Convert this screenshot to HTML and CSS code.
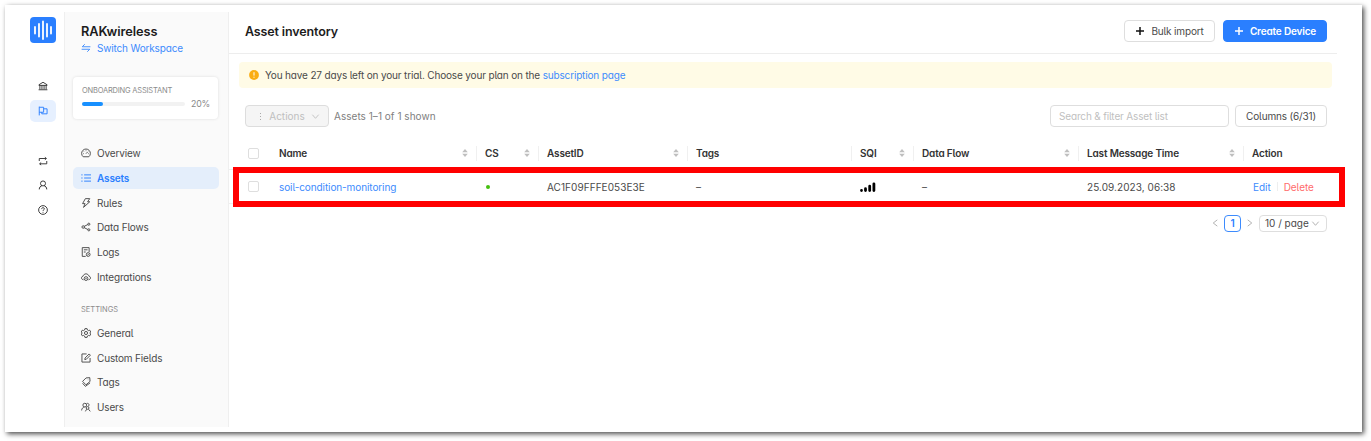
FILE: index.html
```html
<!DOCTYPE html>
<html lang="en">
<head>
<meta charset="utf-8">
<title>Asset inventory</title>
<link rel="stylesheet" href="styles.css">
</head>
<body>
<svg class="defs" width="0" height="0">
  <symbol id="sort" viewBox="0 0 6 8"><path d="M3 0L5.8 3.2H.2zM3 8L5.8 4.8H.2z" fill="#bfbfbf"/></symbol>
  <symbol id="down" viewBox="0 0 10 10"><path d="M1.5 3l3.5 4 3.5-4"/></symbol>
  <symbol id="plus" viewBox="0 0 10 10"><path d="M5 1v8M1 5h8"/></symbol>
</svg>
<div class="panel">
  <nav class="rail">
    <svg class="logo" viewBox="0 0 26 26"><rect width="26" height="26" rx="4" fill="#2a7fff"/><path d="M5 10v6.500M9 7v12.500M13 4.500v17.500M17 7v12.500M21 10v6.500" stroke="#fff" stroke-width="1.800" stroke-linecap="round"/></svg>
    <span class="rail-item first"><svg class="icon" viewBox="0 0 16 16"><path d="M1.500 6L8 2l6.500 4v1h-13zM3 7v6M6.300 7v6M9.700 7v6M13 7v6M1 14h14" stroke-width="1.500"/></svg></span>
    <span class="rail-item active"><svg class="icon" viewBox="0 0 16 16"><path d="M2 1v14M2 2h7v8H2M9 4.500h5.500v8H6V10"/></svg></span>
    <span class="rail-item gap"><svg class="icon" viewBox="0 0 16 16"><path d="M2 8V4h11M11 2l2.500 2L11 6M14 8v4.500H3M5 10.500l-2.500 2 2.500 2"/></svg></span>
    <span class="rail-item"><svg class="icon" viewBox="0 0 16 16"><circle cx="8" cy="5.500" r="4"/><path d="M2 15c0-3 2-5.500 4.500-6M14 15c0-3-2-5.500-4.500-6" stroke-width="1.600"/></svg></span>
    <span class="rail-item"><svg class="icon" viewBox="0 0 16 16"><circle cx="8" cy="8" r="7"/><path d="M5.800 6.500c0-3 4.400-2.800 4.400-.3C10.200 7.800 8 7.600 8 9.500M8 11v1.300"/></svg></span>
  </nav>
  <aside class="sidebar">
    <h2 class="workspace">RAKwireless</h2>
    <a class="switch"><svg class="icon" viewBox="0 0 16 16"><path d="M15 6H2l4-4M1 10h13l-4 4"/></svg><span>Switch Workspace</span></a>
    <div class="onboarding">
      <div class="caption">ONBOARDING ASSISTANT</div>
      <div class="progress"><div class="track"><div class="fill"></div></div><span>20%</span></div>
    </div>
    <div class="menu">
      <a class="item"><svg class="icon" viewBox="0 0 16 16"><path d="M3.500 14a7 7 0 1 1 9 0zM8 9l3-3M3.500 9h1M11.500 9h1M8 4v1M4.800 5.800l.6.600"/></svg><span>Overview</span></a>
      <a class="item selected"><svg class="icon" viewBox="0 0 16 16"><path d="M5 3h11M5 8h11M5 13h11M.5 3h2M.5 8h2M.5 13h2"/></svg><span>Assets</span></a>
      <a class="item"><svg class="icon" viewBox="0 0 16 16"><path d="M7 1h7l-3.500 5H14L4 15l2.500-6H2.500z"/></svg><span>Rules</span></a>
      <a class="item"><svg class="icon" viewBox="0 0 16 16"><circle cx="3.500" cy="8" r="2"/><circle cx="12.500" cy="3.500" r="1.700"/><circle cx="12.500" cy="12.500" r="1.700"/><path d="M5 7l6-3M5 9l6 3"/></svg><span>Data Flows</span></a>
      <a class="item"><svg class="icon" viewBox="0 0 16 16"><path d="M7.500 15H2V1h11v7M4.500 4.500h6M4.500 8h3"/><circle cx="11.500" cy="12" r="3"/><path d="M10 13.500l3-3"/></svg><span>Logs</span></a>
      <a class="item"><svg class="icon" viewBox="0 0 16 16"><path d="M4 12.500C-.5 12 .2 7 3.300 6.700 4.500 1.700 11.500 1.700 12.700 6.700 15.800 7 16.500 12 12 12.500"/><circle cx="8" cy="10.500" r="3"/><path d="M7 10.500h2"/></svg><span>Integrations</span></a>
      <div class="caption group">SETTINGS</div>
      <a class="item"><svg class="icon" viewBox="0 0 16 16"><path d="M6.300 1h3.400l.6 2.200 1.500.9 2.200-.6 1.600 2.800L14 8l1.600 1.700-1.600 2.800-2.200-.6-1.500.9-.6 2.200H6.300l-.6-2.200-1.500-.9-2.200.6L.4 9.700 2 8 .4 6.300 2 3.500l2.200.6 1.500-.9z"/><circle cx="8" cy="8" r="2.500"/></svg><span>General</span></a>
      <a class="item"><svg class="icon" viewBox="0 0 16 16"><path d="M9 1.500H1.500v13h13V8M6 10.500l.5-2.500L13 1.500l2 2L8.500 10z"/></svg><span>Custom Fields</span></a>
      <a class="item"><svg class="icon" viewBox="0 0 16 16"><path d="M8 1.500L14 1l.5 6L8 12.500 2.500 7zM2.500 10L7 15l7.500-5.500"/><path d="M11 4.500h.5"/></svg><span>Tags</span></a>
      <a class="item"><svg class="icon" viewBox="0 0 16 16"><circle cx="6" cy="5" r="3"/><path d="M1 13.500c0-3 2-5 4.500-5.500M9 2.300c4-1 5 3.200 2.300 4.700"/><circle cx="10.500" cy="9.500" r="2.200"/><path d="M7 15l2-3.500M12 11.500l2.800 3.500"/></svg><span>Users</span></a>
    </div>
  </aside>
  <main class="main">
    <header class="top">
      <h1 class="title">Asset inventory</h1>
      <button class="btn bulk"><svg class="icon plus"><use href="#plus"/></svg><span>Bulk import</span></button>
      <button class="btn primary"><svg class="icon plus"><use href="#plus"/></svg><span>Create Device</span></button>
    </header>
    <div class="alert"><svg class="warn" viewBox="0 0 10 10"><circle cx="5" cy="5" r="4.900" fill="#faad14"/><path d="M5 2.200v3.400M5 6.700v1" stroke="#fff"/></svg><span>You have 27 days left on your trial. Choose your plan on the <a class="link">subscription page</a></span></div>
    <div class="tools">
      <button class="btn actions"><span class="dots"><i></i><i></i><i></i></span><span>Actions</span><svg class="icon chev"><use href="#down"/></svg></button>
      <span class="shown">Assets 1–1 of 1 shown</span>
      <div class="search">Search &amp; filter Asset list</div>
      <button class="btn columns">Columns (6/31)</button>
    </div>
    <div class="table">
      <div class="row head">
        <div class="check"><i class="box"></i></div>
        <div class="cell"><span>Name</span><svg class="sort"><use href="#sort"/></svg></div>
        <div class="cell"><span>CS</span><svg class="sort"><use href="#sort"/></svg></div>
        <div class="cell"><span>AssetID</span><svg class="sort"><use href="#sort"/></svg></div>
        <div class="cell"><span>Tags</span></div>
        <div class="cell"><span>SQI</span><svg class="sort"><use href="#sort"/></svg></div>
        <div class="cell"><span>Data Flow</span><svg class="sort"><use href="#sort"/></svg></div>
        <div class="cell"><span>Last Message Time</span><svg class="sort"><use href="#sort"/></svg></div>
        <div class="cell"><span>Action</span></div>
      </div>
      <div class="row data">
        <div class="check"><i class="box"></i></div>
        <div class="cell"><a class="link name">soil-condition-monitoring</a></div>
        <div class="cell"><i class="status"></i></div>
        <div class="cell"><span class="wide">AC1F09FFFE053E3E</span></div>
        <div class="cell">–</div>
        <div class="cell"><svg class="signal" viewBox="0 0 16 10"><path d="M1.500 8.500v0M5.500 6.700v1.800M9.700 4.200v4.300M13.900 1.800v6.700" stroke="#000" stroke-width="2.800" stroke-linecap="round"/></svg></div>
        <div class="cell">–</div>
        <div class="cell"><span class="wide">25.09.2023, 06:38</span></div>
        <div class="cell acts"><a class="link">Edit</a><i class="divider"></i><a class="delete">Delete</a></div>
      </div>
      <div class="highlight"></div>
    </div>
    <div class="pager">
      <svg class="icon arrow" viewBox="0 0 10 10"><path d="M7 1.500L2.500 5 7 8.500"/></svg>
      <span class="page">1</span>
      <svg class="icon arrow" viewBox="0 0 10 10"><path d="M3 1.500L7.500 5 3 8.500"/></svg>
      <div class="size"><span>10 / page</span><svg class="icon chev"><use href="#down"/></svg></div>
    </div>
  </main>
</div>
</body>
</html>
```
FILE: styles.css
```css
* { box-sizing: border-box; }
body { margin: 0; padding: 5px 9px 9px 5px; width: 1371px; height: 441px; background: #fff; overflow: hidden;
  font: 10px/14px Inter, "Liberation Sans", sans-serif; letter-spacing: -.16px; font-feature-settings: "cv11", "cv05"; color: #4a4a4a; }
h1, h2 { margin: 0; font-feature-settings: normal; color: #1c1c1c; font-weight: 600; }
.defs { position: absolute; }
.panel { display: flex; width: 1357px; height: 427px; background: #fff; box-shadow: 2px 2px 5px 0 rgba(0,0,0,.7); }
.icon { width: 10px; height: 10px; fill: none; stroke: currentColor; stroke-width: 1.5; flex: none; }
.link { color: #3d8bfd; }
button { font: inherit; font-feature-settings: inherit; letter-spacing: inherit; color: inherit; }

.rail { width: 59px; padding: 12px 0 0 25px; display: flex; flex-direction: column; color: #333; }
.logo { width: 26px; height: 26px; fill: none; }
.rail-item { width: 26px; height: 22px; margin-bottom: 2.750px; display: flex; align-items: center; justify-content: center; border-radius: 5px; }
.rail-item.first { margin-top: 32px; }
.rail-item.active { background: #e6f0ff; color: #2a7fff; }
.rail-item.gap { margin-top: 25px; }

.sidebar { width: 165px; height: 415px; margin-top: 7px; padding: 12px 9px 0 8px; background: #fafafa; border: solid #efefef; border-width: 0 1px; }
.workspace { margin-left: 8px; font-size: 12.800px; line-height: 15px; letter-spacing: -.08px; }
.switch { display: flex; align-items: center; gap: 6px; margin: 2px 0 0 8px; color: #3d8bfd; line-height: 14px; }
.onboarding { width: 145px; height: 42px; margin: 22px 0 0 0; padding: 9px 8px 0 9px; background: #fff; border-radius: 4px; box-shadow: 0 0 3px rgba(0,0,0,.12); }
.caption { font-size: 7.500px; line-height: 10px; letter-spacing: -.2px; color: #8c8c8c; font-feature-settings: normal; }
.progress { display: flex; align-items: center; gap: 6px; margin-top: 2px; font-size: 8.800px; line-height: 12px; color: #888; }
.track { width: 105px; height: 4px; border-radius: 2px; background: #f2f2f2; }
.fill { width: 20%; height: 4px; border-radius: 2px; background: #1890ff; }
.menu { margin-top: 23px; }
.item { display: flex; align-items: center; gap: 6px; width: 146px; height: 22px; margin-bottom: 2.750px; padding: 0 0 0 8px; border-radius: 5px; }
.item.selected { background: #e4eefb; color: #2a7fff; font-weight: 600; }
.group { margin: 17px 0 7px 8px; letter-spacing: 0; }

.main { width: 1108px; }
.top { display: flex; align-items: center; height: 49px; padding: 4px 10px 0 16px; border-bottom: 1px solid #ededed; }
.title { margin-right: auto; padding-top: 1px; font-size: 12.500px; line-height: 16px; letter-spacing: -.14px; }
.btn { display: flex; align-items: center; justify-content: center; height: 22px; padding: 0; border: 1px solid #dedede; border-radius: 4px; background: #fff; white-space: nowrap; }
.plus { color: #111; }
.bulk { width: 91px; gap: 6px; margin-right: 8px; }
.primary { width: 104px; gap: 6px; background: #2a7fff; border-color: #2a7fff; color: #fff; font-weight: 600; }
.primary .plus { color: #fff; }
.alert { display: flex; align-items: center; gap: 6px; height: 26px; margin: 8px 5px 0 10px; padding: 0 0 0 10px; background: #fffbe6; border-radius: 4px; }
.warn { width: 10px; height: 10px; }
.tools { display: flex; align-items: center; margin: 17px 10px 0 16px; color: #808080; }
.actions { width: 84px; gap: 6px; background: #f5f5f5; border-color: #ddd; color: #bfbfbf; letter-spacing: 0; padding-left: 4px; }
.dots { display: grid; gap: 2px; width: 5px; justify-items: center; }
.dots i { width: 1px; height: 1px; background: #aaa; }
.chev { width: 9px; height: 9px; }
.actions .chev, .size .chev { stroke-width: 1; }
.shown { margin: 0 auto 0 5px; letter-spacing: .03px; }
.search { width: 179px; height: 22px; padding: 3px 8px 0; line-height: 14px; border: 1px solid #dedede; border-radius: 4px; color: #bfbfbf; }
.columns { width: 92px; margin-left: 6px; color: #4a4a4a; }

.table { position: relative; margin-top: 10px; }
.row { display: grid; grid-template-columns: 42px 206px 62px 149px 164px 62px 165px 165px 1fr; align-items: center; border-bottom: 1px solid #efefef; }
.head { height: 33px; font-weight: 600; color: #333; }
.data { height: 34px; }
.check { padding-left: 19px; }
.box { display: block; width: 11px; height: 11px; border: 1px solid #dedede; border-radius: 2px; background: #fff; }
.cell { display: flex; align-items: center; padding: 0 8px; height: 15px; white-space: nowrap; }
.head .cell { border-right: 1px solid #f0f0f0; }
.head .cell:last-child { border: 0; }
.name { letter-spacing: -.1px; }
.wide { letter-spacing: .06px; }
.sort { width: 6px; height: 8px; margin-left: auto; }
.status { width: 4px; height: 4px; margin-left: 1px; border-radius: 50%; background: #45c00f; }
.signal { width: 16px; height: 10px; fill: none; }
.acts { letter-spacing: -.05px; padding-left: 9px; }
.divider { width: 1px; height: 9px; margin: 0 6px; background: #eee; }
.delete { color: #ff6b6b; }
.highlight { position: absolute; left: 4px; top: 30px; width: 1112px; height: 40px; border: 6px solid #f00; }
.pager { display: flex; align-items: center; justify-content: flex-end; margin: 11px 10px 0 0; height: 16px; }
.arrow { width: 9px; color: #aaa; stroke-width: 1; }
.page { width: 17px; height: 17px; margin: 0 4px; border: 1px solid #3d8bfd; border-radius: 4px; color: #2a7fff; font-weight: 600; text-align: center; line-height: 15px; }
.size { display: flex; align-items: center; justify-content: space-between; width: 68px; height: 17px; margin-left: 5px; padding: 0 6px 0 5px; border: 1px solid #dedede; border-radius: 4px; white-space: nowrap; letter-spacing: 0; }
.size .chev { color: #aaa; }
```
